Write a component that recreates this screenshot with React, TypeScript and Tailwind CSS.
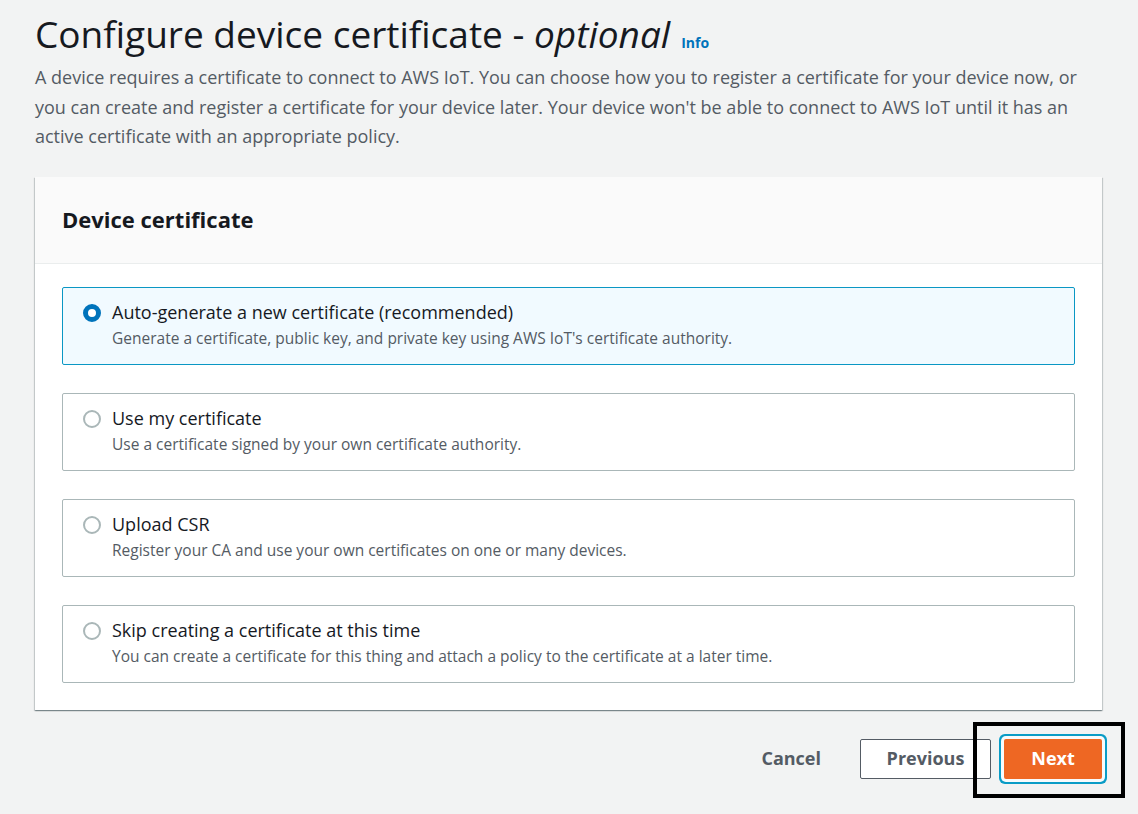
import React, { useState } from 'react';

const options = [
  {
    id: 'auto',
    title: 'Auto-generate a new certificate (recommended)',
    desc: "Generate a certificate, public key, and private key using AWS IoT's certificate authority.",
  },
  {
    id: 'mine',
    title: 'Use my certificate',
    desc: 'Use a certificate signed by your own certificate authority.',
  },
  {
    id: 'csr',
    title: 'Upload CSR',
    desc: 'Register your CA and use your own certificates on one or many devices.',
  },
  {
    id: 'skip',
    title: 'Skip creating a certificate at this time',
    desc: 'You can create a certificate for this thing and attach a policy to the certificate at a later time.',
  },
];

export default function App() {
  const [selected, setSelected] = useState('auto');

  return (
    <div
      className="w-[1138px] h-[814px] bg-[#f2f3f3] text-[#16191f] overflow-hidden"
      style={{ fontFamily: '"Open Sans", "Noto Sans", sans-serif' }}
    >
      <div className="pl-[35px] pr-[37px] pt-[11px]">
        {/* Page header */}
        <div className="flex items-baseline gap-[11px]">
          <h1 className="text-[37px] leading-[46px] font-normal">
            Configure device certificate - <i>optional</i>
          </h1>
          <span className="text-[14px] font-bold text-[#0073bb]">Info</span>
        </div>
        <p className="mt-[6px] text-[18px] leading-[29.5px] text-[#545b64] pr-[20px]">
          A device requires a certificate to connect to AWS IoT. You can choose how you to register a certificate for
          your device now, or you can create and register a certificate for your device later. Your device won't be
          able to connect to AWS IoT until it has an active certificate with an appropriate policy.
        </p>

        {/* Card */}
        <div className="mt-[25px] w-[1067px] bg-white shadow-[0_1px_1px_0_rgba(0,28,36,0.3),1px_1px_1px_0_rgba(0,28,36,0.15),-1px_1px_1px_0_rgba(0,28,36,0.15)]">
          <div className="h-[87px] bg-[#fafafa] border-b border-[#eaeded] flex items-center px-[27px]">
            <h2 className="text-[22px] font-bold -mt-[1px]">Device certificate</h2>
          </div>
          <div className="px-[27px] pt-[23px] pb-[27px] flex flex-col gap-[28px]">
            {options.map((o) => {
              const isSel = selected === o.id;
              return (
                <button
                  key={o.id}
                  onClick={() => setSelected(o.id)}
                  className={`h-[78px] w-full rounded-[2px] border text-left flex items-start px-[20px] pt-[12px] gap-[11px] ${
                    isSel ? 'bg-[#f1faff] border-[#0a97c4]' : 'bg-white border-[#aab7b8]'
                  }`}
                >
                  <span
                    className={`mt-[4px] w-[18px] h-[18px] rounded-full shrink-0 ${
                      isSel ? 'border-[5px] border-[#0073bb] bg-white' : 'border-2 border-[#aab7b8] bg-white'
                    }`}
                  />
                  <span className="flex flex-col">
                    <span className="text-[18px] leading-[25px] text-[#16191f]">{o.title}</span>
                    <span className="text-[15.5px] leading-[26px] text-[#545b64]">{o.desc}</span>
                  </span>
                </button>
              );
            })}
          </div>
        </div>

        {/* Actions */}
        <div className="mt-[29px] w-[1067px] flex justify-end items-center">
          <button className="text-[18px] font-bold text-[#545b64] h-[40px] mr-[39px]">Cancel</button>
          <button className="h-[40px] w-[131px] rounded-[2px] border border-[#545b64] bg-white text-[18px] font-bold text-[#545b64]">
            Previous
          </button>
          <div className="relative ml-[13px]">
            <div className="absolute -left-[31px] -top-[17px] w-[152px] h-[76px] border-[4px] border-black pointer-events-none" />
            <button className="h-[40px] w-[98px] rounded-[2px] bg-[#ee6723] text-white text-[18px] font-bold shadow-[0_0_0_3px_#f7fbfc,0_0_0_5px_#0a9cc6]">
              Next
            </button>
          </div>
        </div>
      </div>
    </div>
  );
}
